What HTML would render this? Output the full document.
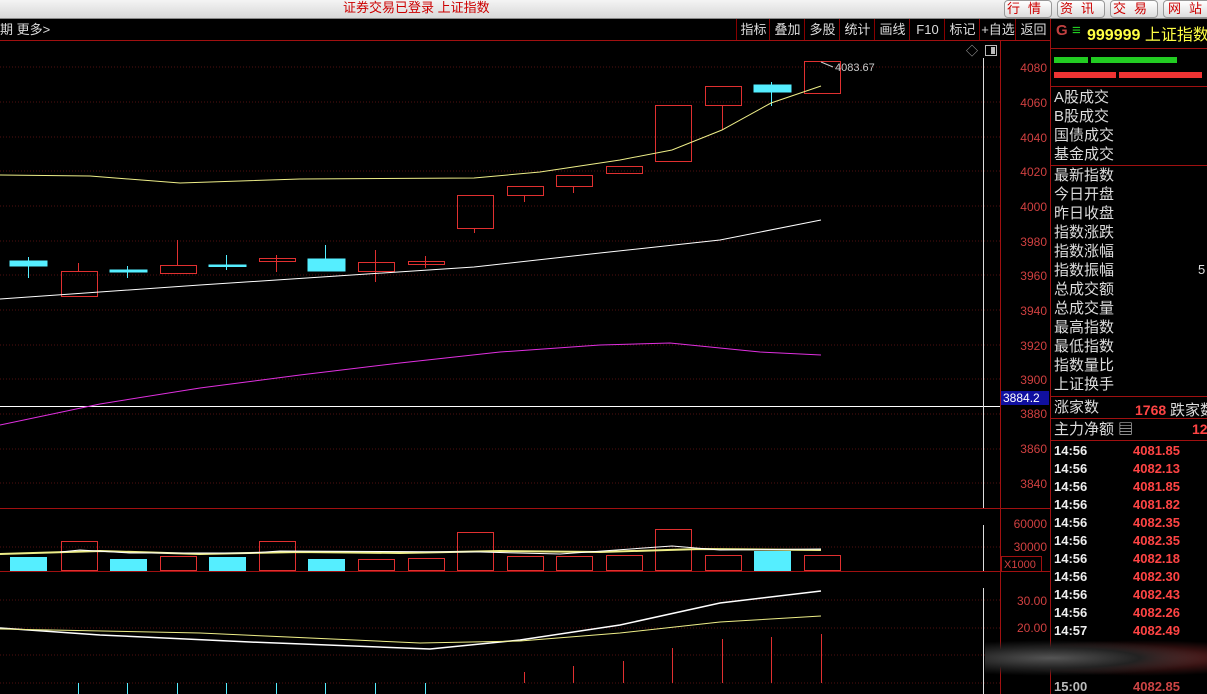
<!DOCTYPE html><html><head><meta charset="utf-8"><style>
body{margin:0;width:1207px;height:694px;background:#000;overflow:hidden;font-family:"Liberation Sans","Noto Sans CJK SC",sans-serif;position:relative}
.top{position:absolute;left:0;top:0;width:1207px;height:18px;background:linear-gradient(#f4f4f4,#d8d8d8);border-bottom:1px solid #888}
.t{position:absolute;white-space:nowrap}
.btn{position:absolute;top:0;height:16px;border:1px solid #999;border-radius:4px;background:linear-gradient(#fff,#ddd);color:#c00;font-size:13px;line-height:15px;text-align:center;letter-spacing:8px}
.tb{position:absolute;top:19px;height:21px;color:#ddd;font-size:13px;line-height:21px;border-left:1px solid #800;text-align:center}
.rl{position:absolute;left:1054px;color:#ddd;font-size:15px;line-height:19px}
.tm{position:absolute;left:1054px;color:#eee;font-size:13px;font-weight:bold}
.pr{position:absolute;left:1133px;color:#ff4444;font-size:13px;font-weight:bold}
</style></head><body>
<div class="top"></div>
<div class="t" style="left:343px;top:0;color:#c00;font-size:13px;line-height:16px">证券交易已登录 上证指数</div>
<div class="btn" style="left:1004px;width:46px">行情</div>
<div class="btn" style="left:1057px;width:46px">资讯</div>
<div class="btn" style="left:1110px;width:46px">交易</div>
<div class="btn" style="left:1163px;width:50px">网站</div>
<div class="t" style="left:0;top:19px;color:#ddd;font-size:13px;line-height:21px">期 更多&gt;</div>
<div class="tb" style="left:736px;width:33px">指标</div>
<div class="tb" style="left:769px;width:35px">叠加</div>
<div class="tb" style="left:804px;width:35px">多股</div>
<div class="tb" style="left:839px;width:35px">统计</div>
<div class="tb" style="left:874px;width:35px">画线</div>
<div class="tb" style="left:909px;width:35px">F10</div>
<div class="tb" style="left:944px;width:35px">标记</div>
<div class="tb" style="left:979px;width:36px">+自选</div>
<div class="tb" style="left:1015px;width:35px">返回</div>
<svg width="1207" height="694" style="position:absolute;left:0;top:0">
<line x1="0" y1="40.5" x2="1050" y2="40.5" stroke="#a01010"/>
<line x1="1050.5" y1="19" x2="1050.5" y2="694" stroke="#a01010"/>
<line x1="1000.5" y1="40" x2="1000.5" y2="694" stroke="#a01010"/>
<line x1="0" y1="508.5" x2="1050" y2="508.5" stroke="#a01010"/>
<line x1="0" y1="571.5" x2="1000" y2="571.5" stroke="#a01010"/>
<line x1="1000" y1="571.5" x2="1050" y2="571.5" stroke="#a01010"/>
<rect x="1001.5" y="556.5" width="40" height="15" fill="none" stroke="#a01010"/>
<text x="1004" y="568" fill="#d04040" font-size="11">X1000</text>
<g stroke="#501010" stroke-dasharray="1,2">
<line x1="0" y1="67" x2="1000" y2="67"/><line x1="0" y1="102" x2="1000" y2="102"/><line x1="0" y1="137" x2="1000" y2="137"/><line x1="0" y1="171" x2="1000" y2="171"/><line x1="0" y1="206" x2="1000" y2="206"/><line x1="0" y1="241" x2="1000" y2="241"/><line x1="0" y1="275" x2="1000" y2="275"/><line x1="0" y1="310" x2="1000" y2="310"/><line x1="0" y1="345" x2="1000" y2="345"/><line x1="0" y1="379" x2="1000" y2="379"/><line x1="0" y1="414" x2="1000" y2="414"/><line x1="0" y1="449" x2="1000" y2="449"/><line x1="0" y1="483" x2="1000" y2="483"/>
<line x1="0" y1="547" x2="1000" y2="547"/><line x1="0" y1="600" x2="1000" y2="600"/><line x1="0" y1="628" x2="1000" y2="628"/><line x1="0" y1="655" x2="1000" y2="655"/><line x1="0" y1="683" x2="1000" y2="683"/>
</g>
<g fill="#d04040" font-size="12" text-anchor="end">
<text x="1047" y="72">4080</text><text x="1047" y="107">4060</text><text x="1047" y="142">4040</text><text x="1047" y="176">4020</text><text x="1047" y="211">4000</text><text x="1047" y="246">3980</text><text x="1047" y="280">3960</text><text x="1047" y="315">3940</text><text x="1047" y="350">3920</text><text x="1047" y="384">3900</text><text x="1047" y="418">3880</text><text x="1047" y="453">3860</text><text x="1047" y="488">3840</text>
<text x="1047" y="528">60000</text><text x="1047" y="551">30000</text><text x="1047" y="605">30.00</text><text x="1047" y="632">20.00</text>
</g>
<line x1="0" y1="406.5" x2="1000" y2="406.5" stroke="#fff"/>
<rect x="1001" y="391" width="48" height="14" fill="#1010a0"/>
<text x="1003" y="402" fill="#fff" font-size="12">3884.2</text>
<line x1="983.5" y1="58" x2="983.5" y2="508" stroke="#ddd"/>
<text x="966" y="55" fill="#aaa" font-size="12">◇</text>
<rect x="985.5" y="45.5" width="11" height="10" fill="none" stroke="#bbb"/><rect x="991" y="47" width="4" height="7" fill="#bbb"/>
<!-- candles -->
<g stroke="#e03030" fill="none">
<line x1="78.5" y1="263" x2="78.5" y2="271"/><rect x="61.5" y="271.5" width="36" height="25"/>
<line x1="177.5" y1="240" x2="177.5" y2="265"/><rect x="160.5" y="265.5" width="36" height="8"/>
<line x1="276.5" y1="255" x2="276.5" y2="272"/><rect x="259.5" y="258.5" width="36" height="3"/>
<line x1="375.5" y1="250" x2="375.5" y2="282"/><rect x="358.5" y="262.5" width="36" height="9"/>
<line x1="425.5" y1="256" x2="425.5" y2="268"/><rect x="408.5" y="261.5" width="36" height="3"/>
<line x1="474.5" y1="228" x2="474.5" y2="233"/><rect x="457.5" y="195.5" width="36" height="33"/>
<line x1="524.5" y1="195" x2="524.5" y2="202"/><rect x="507.5" y="186.5" width="36" height="9"/>
<line x1="573.5" y1="186" x2="573.5" y2="193"/><rect x="556.5" y="175.5" width="36" height="11"/>
<rect x="606.5" y="166.5" width="36" height="7"/>
<rect x="655.5" y="105.5" width="36" height="56"/>
<line x1="722.5" y1="105" x2="722.5" y2="130"/><rect x="705.5" y="86.5" width="36" height="19"/>
<rect x="804.5" y="61.5" width="36" height="32"/>
</g>
<g fill="#55eeff" stroke="#55eeff">
<line x1="28.5" y1="257" x2="28.5" y2="278"/><rect x="10" y="261" width="37" height="5"/>
<line x1="127.5" y1="266" x2="127.5" y2="278"/><rect x="110" y="270" width="37" height="2"/>
<line x1="226.5" y1="255" x2="226.5" y2="270"/><rect x="209" y="265" width="37" height="1.5"/>
<line x1="325.5" y1="245" x2="325.5" y2="271"/><rect x="308" y="259" width="37" height="12"/>
<line x1="771.5" y1="82" x2="771.5" y2="106"/><rect x="754" y="85" width="37" height="7"/>
</g>
<polyline fill="none" stroke="#eeee88" points="0,175 90,176 180,183 300,179 474,178 540,172 620,160 672,150 722,130 771,103 821,86"/>
<polyline fill="none" stroke="#fff" points="0,299 200,285 474,267 600,253 720,240 821,220"/>
<polyline fill="none" stroke="#e030e0" points="0,425 100,404 200,388 300,375 400,363 500,352 600,345 670,343 760,352 821,355"/>
<line x1="821" y1="62" x2="833" y2="67" stroke="#ccc"/>
<text x="835" y="71" fill="#ccc" font-size="11">4083.67</text>
<!-- volume -->
<g fill="#55eeff"><rect x="10" y="557" width="37" height="14"/><rect x="110" y="559" width="37" height="12"/><rect x="209" y="557" width="37" height="14"/><rect x="308" y="559" width="37" height="12"/><rect x="754" y="551" width="37" height="20"/></g>
<g stroke="#e03030" fill="none">
<rect x="61.5" y="541.5" width="36" height="29"/><rect x="160.5" y="556.5" width="36" height="14"/><rect x="259.5" y="541.5" width="36" height="29"/><rect x="358.5" y="559.5" width="36" height="11"/><rect x="408.5" y="558.5" width="36" height="12"/><rect x="457.5" y="532.5" width="36" height="38"/><rect x="507.5" y="556.5" width="36" height="14"/><rect x="556.5" y="556.5" width="36" height="14"/><rect x="606.5" y="555.5" width="36" height="15"/><rect x="655.5" y="529.5" width="36" height="41"/><rect x="705.5" y="555.5" width="36" height="15"/><rect x="804.5" y="555.5" width="36" height="15"/>
</g>
<polyline fill="none" stroke="#eeee88" stroke-width="2" points="0,554 100,551 200,554 300,552 400,553 500,551 600,552 700,549 821,550"/>
<polyline fill="none" stroke="#fff" points="60,552 80,550 130,553 250,553 280,551 480,552 560,554 672,546 720,550 821,549"/>
<!-- indicator -->
<polyline fill="none" stroke="#fff" stroke-width="1.5" points="0,628 100,635 250,642 430,649 520,640 620,625 720,603 821,591"/>
<polyline fill="none" stroke="#eeee88" points="0,629 200,633 420,643 520,641 620,633 720,622 821,616"/>
<g stroke="#e03030"><line x1="524.5" y1="683" x2="524.5" y2="672"/><line x1="573.5" y1="683" x2="573.5" y2="666"/><line x1="623.5" y1="683" x2="623.5" y2="661"/><line x1="672.5" y1="683" x2="672.5" y2="648"/><line x1="722.5" y1="683" x2="722.5" y2="639"/><line x1="771.5" y1="683" x2="771.5" y2="637"/><line x1="821.5" y1="683" x2="821.5" y2="634"/></g>
<g stroke="#55eeff"><line x1="78.5" y1="683" x2="78.5" y2="694"/><line x1="127.5" y1="683" x2="127.5" y2="694"/><line x1="177.5" y1="683" x2="177.5" y2="694"/><line x1="226.5" y1="683" x2="226.5" y2="694"/><line x1="276.5" y1="683" x2="276.5" y2="694"/><line x1="325.5" y1="683" x2="325.5" y2="694"/><line x1="375.5" y1="683" x2="375.5" y2="694"/><line x1="425.5" y1="683" x2="425.5" y2="694"/></g>
<line x1="983.5" y1="525" x2="983.5" y2="571" stroke="#ddd"/>
<line x1="983.5" y1="588" x2="983.5" y2="694" stroke="#ddd"/>
<!-- right panel -->
<line x1="1050" y1="48.5" x2="1207" y2="48.5" stroke="#a01010"/>
<line x1="1050" y1="86.5" x2="1207" y2="86.5" stroke="#a01010"/>
<line x1="1050" y1="165.5" x2="1207" y2="165.5" stroke="#a01010"/>
<line x1="1050" y1="396.5" x2="1207" y2="396.5" stroke="#a01010"/>
<line x1="1050" y1="418.5" x2="1207" y2="418.5" stroke="#a01010"/>
<line x1="1050" y1="440.5" x2="1207" y2="440.5" stroke="#a01010"/>
<rect x="1054" y="57" width="34" height="6" fill="#22cc22"/><rect x="1091" y="57" width="86" height="6" fill="#22cc22"/>
<rect x="1054" y="72" width="62" height="6" fill="#ee3333"/><rect x="1119" y="72" width="83" height="6" fill="#ee3333"/>
</svg>
<div class="t" style="left:1056px;top:22px;font-size:15px;color:#c04040;font-weight:bold">G</div>
<div class="t" style="left:1072px;top:22px;font-size:15px;color:#22cc22">≡</div>
<div class="t" style="left:1087px;top:21px;font-size:16px;color:#ffff44"><b>999999</b> 上证指数</div>
<div class="rl" style="top:88px">A股成交<br>B股成交<br>国债成交<br>基金成交</div>
<div class="rl" style="top:166px">最新指数<br>今日开盘<br>昨日收盘<br>指数涨跌<br>指数涨幅<br>指数振幅<br>总成交额<br>总成交量<br>最高指数<br>最低指数<br>指数量比<br>上证换手</div>
<div class="t" style="left:1198px;top:262px;color:#ddd;font-size:13px">5</div>
<div class="rl" style="top:398px">涨家数</div>
<div class="t" style="left:1135px;top:399px;color:#ff4444;font-size:14px;font-weight:bold">1768 <span style="color:#ddd;font-weight:normal;font-size:15px">跌家数</span></div>
<div class="rl" style="top:420px">主力净额 ▤</div>
<div class="t" style="left:1192px;top:421px;color:#ff4444;font-size:14px;font-weight:bold">12</div>
<div class="tm" style="top:443px">14:56</div><div class="pr" style="top:443px">4081.85</div>
<div class="tm" style="top:461px">14:56</div><div class="pr" style="top:461px">4082.13</div>
<div class="tm" style="top:479px">14:56</div><div class="pr" style="top:479px">4081.85</div>
<div class="tm" style="top:497px">14:56</div><div class="pr" style="top:497px">4081.82</div>
<div class="tm" style="top:515px">14:56</div><div class="pr" style="top:515px">4082.35</div>
<div class="tm" style="top:533px">14:56</div><div class="pr" style="top:533px">4082.35</div>
<div class="tm" style="top:551px">14:56</div><div class="pr" style="top:551px">4082.18</div>
<div class="tm" style="top:569px">14:56</div><div class="pr" style="top:569px">4082.30</div>
<div class="tm" style="top:587px">14:56</div><div class="pr" style="top:587px">4082.43</div>
<div class="tm" style="top:605px">14:56</div><div class="pr" style="top:605px">4082.26</div>
<div class="tm" style="top:623px">14:57</div><div class="pr" style="top:623px">4082.49</div>
<div class="t" style="left:985px;top:640px;width:222px;height:36px;background:radial-gradient(ellipse at 30% 50%,#555 0,#222 40%,transparent 70%),radial-gradient(ellipse at 70% 50%,#733 0,#311 40%,transparent 70%)"></div>
<div class="tm" style="top:679px;color:#bbb">15:00</div><div class="pr" style="top:679px;color:#c44">4082.85</div>
</body></html>
